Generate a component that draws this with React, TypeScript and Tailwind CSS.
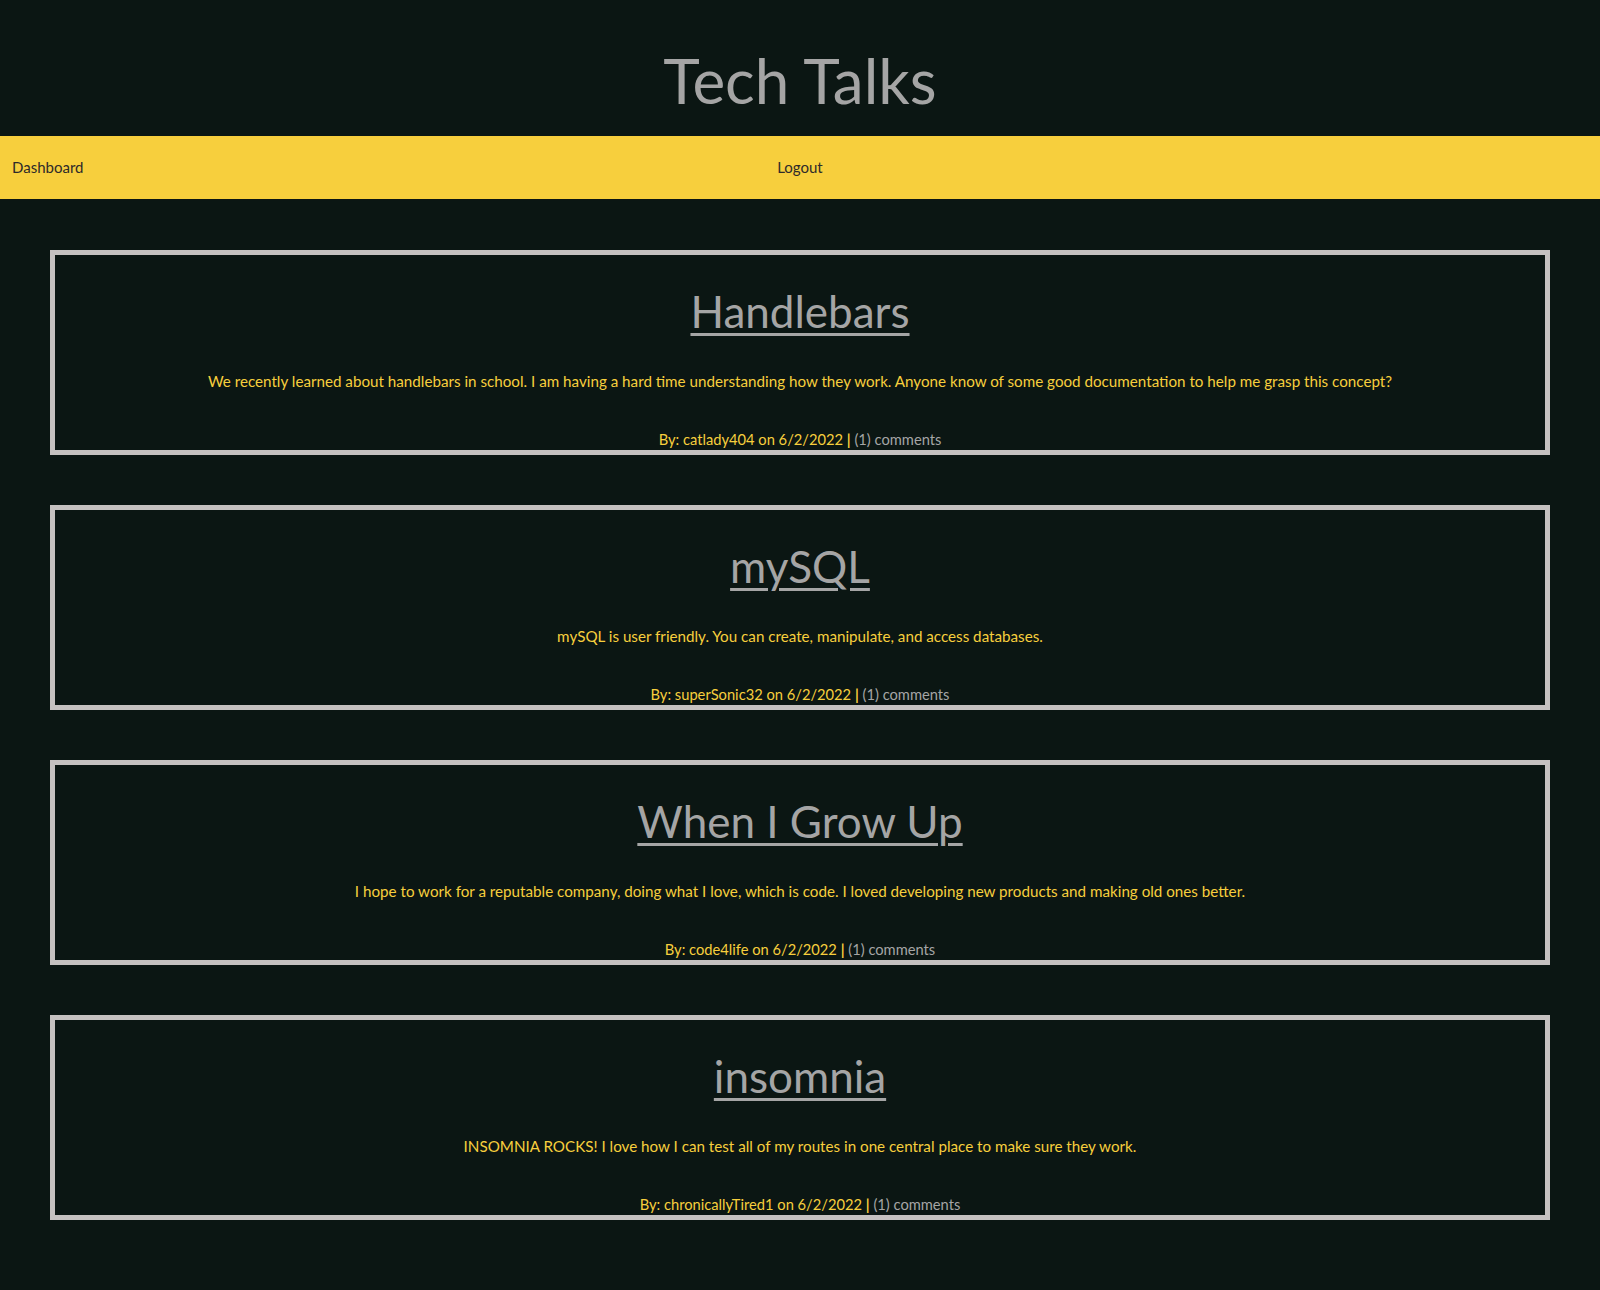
const posts = [
  {
    title: "Handlebars",
    body: "We recently learned about handlebars in school. I am having a hard time understanding how they work. Anyone know of some good documentation to help me grasp this concept?",
    user: "catlady404",
  },
  {
    title: "mySQL",
    body: "mySQL is user friendly. You can create, manipulate, and access databases.",
    user: "superSonic32",
  },
  {
    title: "When I Grow Up",
    body: "I hope to work for a reputable company, doing what I love, which is code. I loved developing new products and making old ones better.",
    user: "code4life",
  },
  {
    title: "insomnia",
    body: "INSOMNIA ROCKS! I love how I can test all of my routes in one central place to make sure they work.",
    user: "chronicallyTired1",
  },
];

const font = { fontFamily: 'Lato, "Open Sans", sans-serif' };

export default function App() {
  return (
    <div className="min-h-[1290px] bg-[#0b1613]" style={font}>
      <header className="h-[136px] flex items-center justify-center">
        <h1 className="text-[62px] leading-none text-[#a5a5a5] mt-[24px]">Tech Talks</h1>
      </header>
      <nav className="h-[63px] bg-[#f7cf3d] grid grid-cols-3 items-center text-[15px] text-[#2e2a2a]">
        <a className="pl-[12px]">Dashboard</a>
        <a className="text-center">Logout</a>
        <span />
      </nav>
      <main className="flex flex-col gap-[50px] px-[50px] pt-[51px] pb-[71px]">
        {posts.map((p) => (
          <section
            key={p.title}
            className="h-[205px] border-[5px] border-[#c5c1c0] flex flex-col items-center text-center"
          >
            <h2 className="mt-[30px] text-[44px] leading-[52px] text-[#a5a5a5] underline decoration-[3px] underline-offset-[5px]">
              {p.title}
            </h2>
            <p className="mt-[32px] text-[15.2px] leading-[24px] text-[#f7cf3d]">{p.body}</p>
            <p className="mt-auto mb-[1px] text-[14.7px] leading-[20px] text-[#f7cf3d]">
              By: {p.user} on 6/2/2022 <span className="font-bold">|</span>{" "}
              <span className="text-[#a5a5a5]">(1) comments</span>
            </p>
          </section>
        ))}
      </main>
    </div>
  );
}
